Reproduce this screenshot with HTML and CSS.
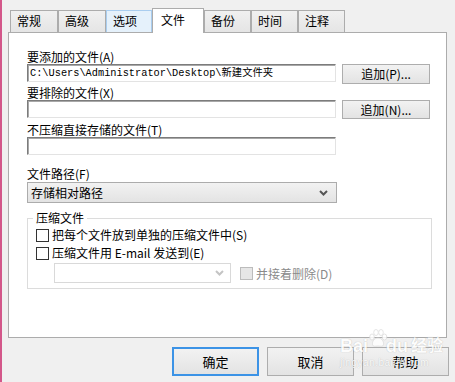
FILE: index.html
```html
<!DOCTYPE html>
<html lang="zh-CN">
<head>
    <meta charset="UTF-8">
    <title>文件</title>
    <link rel="stylesheet" href="styles.css">
</head>
<body>
    <div class="tabs">
        <div class="tab tab-w48">常规</div>
        <div class="tab tab-w48">高级</div>
        <div class="tab tab-hover">选项</div>
        <div class="tab tab-active">文件</div>
        <div class="tab">备份</div>
        <div class="tab">时间</div>
        <div class="tab">注释</div>
    </div>

    <div class="panel">
        <div class="label">要添加的文件(A)</div>
        <div class="field-row">
            <div class="textbox">C:\Users\Administrator\Desktop\新建文件夹</div>
            <button class="btn btn-small">追加(P)...</button>
        </div>

        <div class="label gap-2">要排除的文件(X)</div>
        <div class="field-row">
            <div class="textbox"></div>
            <button class="btn btn-small btn-h19">追加(N)...</button>
        </div>

        <div class="label gap-3">不压缩直接存储的文件(T)</div>
        <div class="textbox"></div>

        <div class="label gap-12">文件路径(F)</div>
        <div class="select">
            <span>存储相对路径</span>
            <svg width="9" height="6" viewBox="0 0 9 6"><path d="M1 1 L4.5 4.5 L8 1" fill="none" stroke="#555" stroke-width="2"/></svg>
        </div>

        <fieldset class="group">
            <legend>压缩文件</legend>
            <div class="check-row">
                <span class="checkbox"></span>
                <span>把每个文件放到单独的压缩文件中(S)</span>
            </div>
            <div class="check-row">
                <span class="checkbox"></span>
                <span>压缩文件用 E-mail 发送到(E)</span>
            </div>
            <div class="mail-row">
                <div class="combo">
                    <svg width="9" height="6" viewBox="0 0 9 6"><path d="M1 1 L4.5 4.5 L8 1" fill="none" stroke="#c4c4c4" stroke-width="2"/></svg>
                </div>
                <span class="checkbox checkbox-off"></span>
                <span class="muted">并接着删除(D)</span>
            </div>
        </fieldset>
    </div>

    <div class="actions">
        <button class="btn btn-big btn-default">确定</button>
        <button class="btn btn-big">取消</button>
        <button class="btn btn-big">帮助</button>
    </div>

    <!-- watermark from the screenshot -->
    <div class="watermark">
        <div class="wm-logo">
            <span>Bai</span>
            <svg class="paw" width="20" height="19" viewBox="0 0 20 19">
                <g fill="#fff" stroke="#d8d8d8" stroke-width="0.8">
                    <ellipse cx="4" cy="8" rx="2.3" ry="3"/>
                    <ellipse cx="8" cy="3.5" rx="2.3" ry="3"/>
                    <ellipse cx="13" cy="3.5" rx="2.3" ry="3"/>
                    <ellipse cx="16.5" cy="8" rx="2.3" ry="3"/>
                    <path d="M10 9 C6 9 4 13 4.5 15.5 C5 18 8 17 10 17 C12 17 15 18 15.5 15.5 C16 13 14 9 10 9 Z"/>
                </g>
            </svg>
            <span>du</span>
            <span class="wm-cn">经验</span>
        </div>
        <div class="wm-url">jingyan.baidu.com</div>
    </div>
</body>
</html>
```

FILE: styles.css
```css
html, body {
    height: 100%;
}
body {
    margin: 0;
    padding: 8px 6px 0 6px;
    box-sizing: border-box;
    border-left: 2px solid #d3578a;
    background-color: #f0f0f0;
    font-family: "Noto Sans CJK SC", "Liberation Sans", sans-serif;
    font-size: 12px;
    color: #000;
    position: relative;
    overflow: hidden;
}
/* Tabs */
.tabs {
    display: flex;
    align-items: flex-end;
    height: 24px;
    padding-left: 2px;
}
.tab {
    width: 47px;
    height: 22px;
    box-sizing: border-box;
    border: 1px solid #acacac;
    border-bottom: none;
    background: linear-gradient(#f0f0f0, #e5e5e5);
    line-height: 20px;
    padding-left: 6px;
    font-size: 12px;
}
.tab-w48 {
    width: 48px;
}
.tab-hover {
    width: 46px;
    background: #e5f1fb;
    border-color: #a9cdef;
}
.tab-active {
    width: 52px;
    height: 25px;
    margin-bottom: -1px;
    background: #fff;
    position: relative;
    z-index: 1;
    line-height: 22px;
    padding-left: 8px;
}
/* Main panel */
.panel {
    height: 306px;
    box-sizing: border-box;
    margin-right: 2px;
    border: 1px solid #acacac;
    background-color: #fff;
    padding: 17px 0 0 18px;
}
.label {
    line-height: 14px;
    height: 14px;
}
.gap-2 { margin-top: 2px; }
.gap-3 { margin-top: 3px; }
.gap-12 { margin-top: 12px; }
.field-row {
    display: flex;
    align-items: flex-start;
    gap: 6px;
    height: 20px;
}
.textbox {
    width: 309px;
    height: 18px;
    box-sizing: border-box;
    border: 1px solid;
    border-color: #7c7c7c #e3e3e3 #e3e3e3 #7c7c7c;
    box-shadow: inset 1px 1px 0 #a8a8a8;
    background: #fff;
    font-family: "Liberation Mono", "Noto Sans CJK SC", monospace;
    font-size: 10.3px;
    line-height: 16px;
    padding-left: 2px;
    white-space: nowrap;
    overflow: hidden;
}
.btn {
    font-family: "Noto Sans CJK SC", "Liberation Sans", sans-serif;
    font-size: 12px;
    color: #000;
    border: 1px solid #adadad;
    background: linear-gradient(#f2f2f2, #e3e3e3);
    padding: 0;
    margin: 0;
    cursor: pointer;
}
.btn-small {
    width: 88px;
    height: 20px;
    line-height: 16px;
}
.btn-h19 {
    height: 19px;
}
.btn-big {
    width: 87px;
    height: 29px;
    font-size: 13px;
}
.btn-default {
    border: 2px solid #3c93e6;
}
.select {
    margin-top: 1px;
    width: 310px;
    height: 21px;
    box-sizing: border-box;
    border: 1px solid #acacac;
    background: linear-gradient(#f2f2f2, #e3e3e3);
    display: flex;
    align-items: center;
    justify-content: space-between;
    padding: 0 8px 0 3px;
}
/* Group box */
.group {
    margin: 8px 0 0 0;
    width: 405px;
    box-sizing: border-box;
    border: 1px solid #dcdcdc;
    padding: 2px 0 5px 8px;
    min-width: 0;
}
.group legend {
    padding: 0 3px;
    margin-left: -3px;
    line-height: 14px;
}
.check-row {
    display: flex;
    align-items: center;
    gap: 3px;
    height: 16px;
    line-height: 16px;
}
.check-row + .check-row {
    margin-top: 2px;
}
.checkbox {
    width: 13px;
    height: 13px;
    box-sizing: border-box;
    border: 1px solid #333;
    background: #fff;
    flex: none;
}
.checkbox-off {
    border-color: #bcbcbc;
    background: #e6e6e6;
    margin-left: 9px;
    margin-right: 3px;
}
.mail-row {
    display: flex;
    align-items: center;
    margin-top: 2px;
    padding-left: 18px;
}
.combo {
    width: 177px;
    height: 20px;
    box-sizing: border-box;
    border: 1px solid #d9d9d9;
    background: #fff;
    display: flex;
    align-items: center;
    justify-content: flex-end;
    padding-right: 6px;
}
.muted {
    color: #8a8a8a;
}
/* Bottom buttons */
.actions {
    display: flex;
    justify-content: flex-end;
    gap: 8px;
    margin-top: 9px;
}
/* Watermark */
.watermark {
    position: absolute;
    left: 338px;
    top: 326px;
    color: #fff;
    text-shadow: 0 0 1px rgba(0, 0, 0, 0.3);
    opacity: 0.85;
    pointer-events: none;
}
.wm-logo {
    display: flex;
    align-items: flex-end;
    font-family: "Liberation Sans", "Noto Sans CJK SC", sans-serif;
    font-size: 18px;
    font-weight: bold;
    line-height: 20px;
    height: 30px;
}
.paw {
    margin: 0 -2px 8px 0;
}
.wm-cn {
    font-size: 16px;
    margin-left: 3px;
}
.wm-url {
    font-family: "Liberation Sans", sans-serif;
    font-size: 10px;
    line-height: 10px;
    margin-top: 2px;
    letter-spacing: 0.5px;
}
```
